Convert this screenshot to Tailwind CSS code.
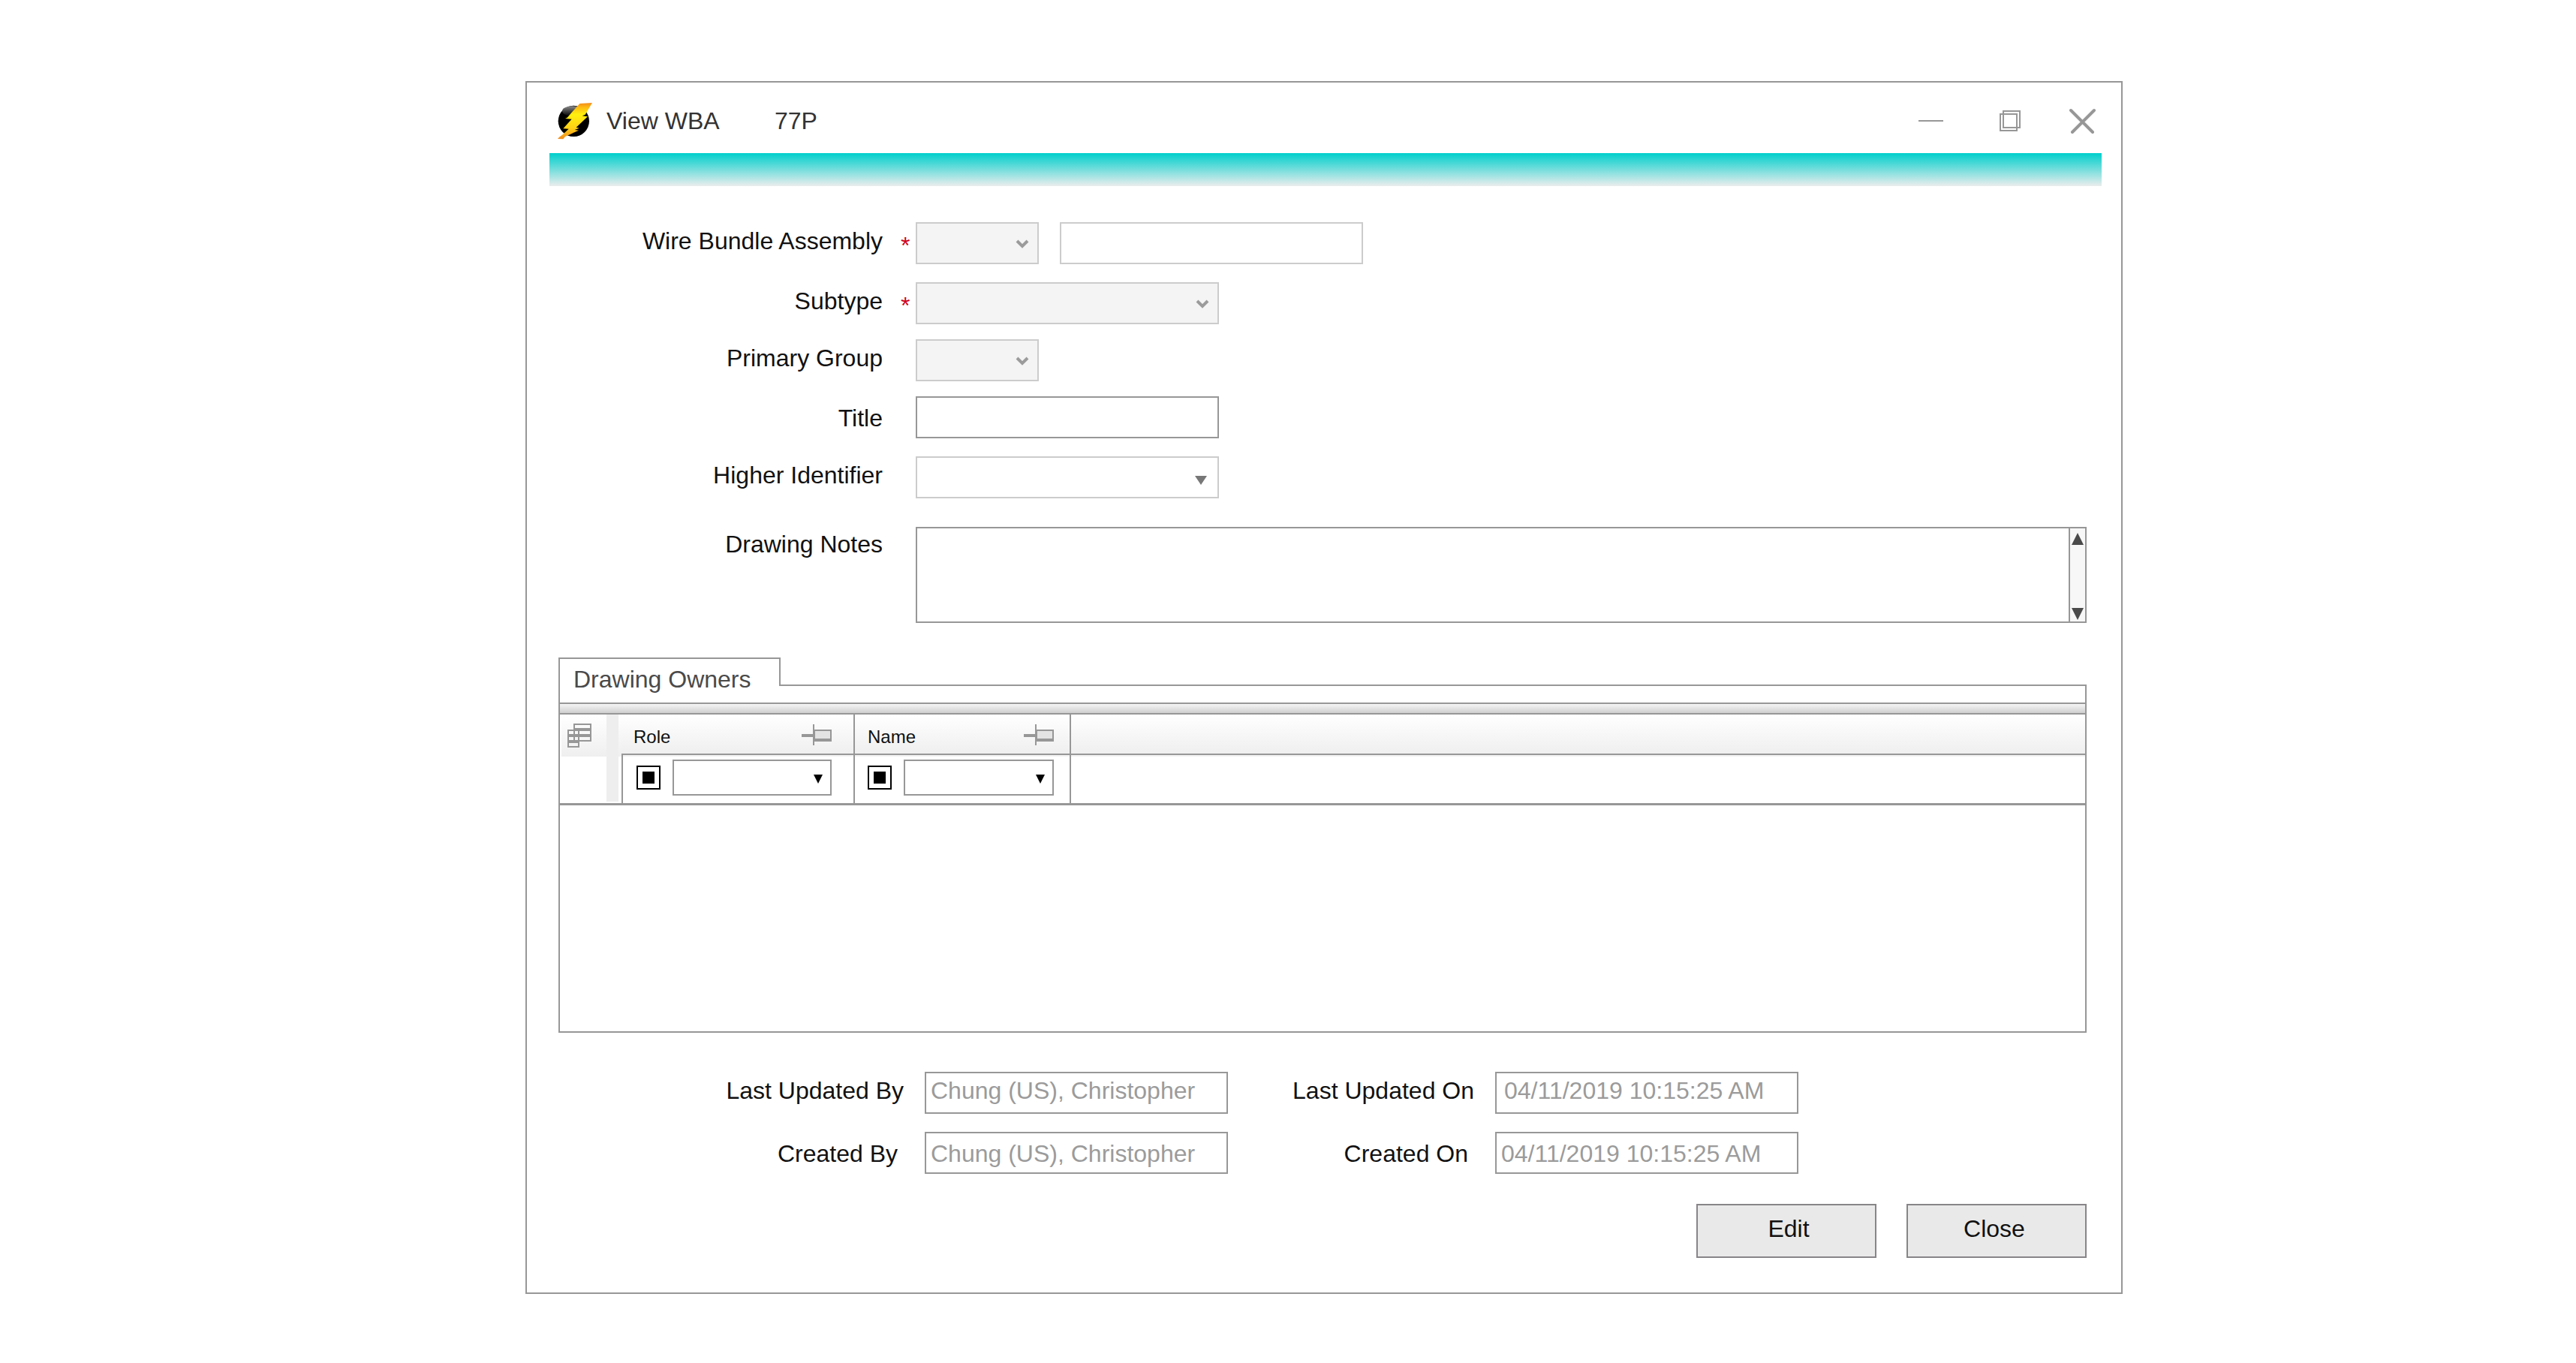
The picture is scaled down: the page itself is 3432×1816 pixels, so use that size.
<!DOCTYPE html>
<html lang="en">
<head>
<meta charset="utf-8">
<title>View WBA 77P</title>
<script src="https://cdn.jsdelivr.net/npm/@tailwindcss/browser@4"></script>
</head>
<body class="bg-white font-['Liberation_Sans',Arial,sans-serif] text-[32px] leading-9 text-[#111111]">
<div class="grid grid-cols-[700fr_2128fr_604fr] pt-[108px] pb-[92px]">
<main class="col-start-2 min-w-0 border-2 border-[#979797] bg-white pb-[46px]">

  <header class="flex h-[94px] items-center pt-2 pr-[33px] pl-[41px] text-[#333333]">
    <svg class="mr-[19px] h-[50px] w-[46px] shrink-0" viewBox="0 0 138 150" aria-hidden="true">
      <defs>
        <linearGradient id="bolt" x1="0" y1="0" x2="0" y2="1"><stop offset="0" stop-color="#f28a1c"/><stop offset=".12" stop-color="#fdb913"/><stop offset=".32" stop-color="#fff00f"/><stop offset=".7" stop-color="#ffd015"/><stop offset="1" stop-color="#f08a1c"/></linearGradient>
        <linearGradient id="gloss" x1="0" y1="0" x2="0" y2="1"><stop offset="0" stop-color="#8a8a8a"/><stop offset="1" stop-color="#000000"/></linearGradient>
      </defs>
      <circle cx="64" cy="76" r="62" fill="#000000"/>
      <ellipse cx="58" cy="36" rx="40" ry="20" fill="url(#gloss)"/>
      <path d="M138 3 88 6 38 62 30 66 56 68 22 106 44 107 20 130 6 140 0 147 22 148 30 138 84 113 68 111 86 104 74 101 120 58 98 55 110 50Z" fill="url(#bolt)"/>
    </svg>
    <h1 class="w-[224px] shrink-0">View WBA</h1>
    <span>77P</span>
    <button class="ml-auto flex h-9 w-9 items-center justify-center" aria-label="Minimize"><svg class="h-[2px] w-[33px]" viewBox="0 0 33 2"><path d="M0 1H33" stroke="#979797" stroke-width="2"/></svg></button>
    <button class="ml-[70px] flex h-9 w-9 items-center justify-center" aria-label="Restore"><svg class="h-7 w-7" viewBox="0 0 28 28" fill="none" stroke="#979797" stroke-width="2"><path d="M5 1H27V23H5ZM1 5H23V27H1Z"/></svg></button>
    <button class="ml-[61px] flex h-9 w-9 items-center justify-center" aria-label="Close window"><svg class="h-9 w-9" viewBox="0 0 36 36" stroke="#979797" stroke-width="4" stroke-linecap="round"><path d="M2 4 31 33M33 4 4 33"/></svg></button>
  </header>
  <div class="mr-[26px] ml-[30px] h-11 bg-linear-to-b/srgb from-[#00cfcc] to-[#ebeded]"></div>

  <form class="mt-12 pr-[46px]">
    <div class="grid grid-cols-[474px_44px_1fr]">
      <label for="wba" class="pt-[7px] text-right">Wire Bundle Assembly</label>
      <span class="pt-[13px] pl-6 text-[#d0021b]">*</span>
      <div class="flex gap-7">
        <div class="relative h-14 w-[164px]">
          <select id="wba" disabled class="h-14 w-full appearance-none border-2 border-[#cccccc] bg-[#f4f4f4] opacity-100"><option></option></select>
          <svg class="pointer-events-none absolute top-[23px] right-[13px] h-3 w-[18px]" viewBox="0 0 18 12" fill="none" stroke="#9b9b9b" stroke-width="4"><path d="M2 2 9 9 16 2"/></svg>
        </div>
        <input aria-label="Assembly number" class="h-14 w-[404px] border-2 border-[#cccccc] px-2">
      </div>
    </div>
    <div class="mt-6 grid grid-cols-[474px_44px_1fr]">
      <label for="subtype" class="pt-[7px] text-right">Subtype</label>
      <span class="pt-[13px] pl-6 text-[#d0021b]">*</span>
      <div class="relative h-14 w-[404px]">
        <select id="subtype" disabled class="h-14 w-full appearance-none border-2 border-[#cccccc] bg-[#f4f4f4] opacity-100"><option></option></select>
        <svg class="pointer-events-none absolute top-[23px] right-[13px] h-3 w-[18px]" viewBox="0 0 18 12" fill="none" stroke="#9b9b9b" stroke-width="4"><path d="M2 2 9 9 16 2"/></svg>
      </div>
    </div>
    <div class="mt-5 grid grid-cols-[474px_44px_1fr]">
      <label for="group" class="pt-[7px] text-right">Primary Group</label>
      <div class="relative col-start-3 h-14 w-[164px]">
        <select id="group" disabled class="h-14 w-full appearance-none border-2 border-[#cccccc] bg-[#f4f4f4] opacity-100"><option></option></select>
        <svg class="pointer-events-none absolute top-[23px] right-[13px] h-3 w-[18px]" viewBox="0 0 18 12" fill="none" stroke="#9b9b9b" stroke-width="4"><path d="M2 2 9 9 16 2"/></svg>
      </div>
    </div>
    <div class="mt-5 grid grid-cols-[474px_44px_1fr]">
      <label for="title" class="pt-[11px] text-right">Title</label>
      <input id="title" class="col-start-3 h-14 w-[404px] border-2 border-[#979797] px-2">
    </div>
    <div class="mt-6 grid grid-cols-[474px_44px_1fr]">
      <label for="higher" class="pt-[7px] text-right">Higher Identifier</label>
      <div class="relative col-start-3 h-14 w-[404px]">
        <select id="higher" class="h-14 w-full appearance-none border-2 border-[#cccccc] bg-white"><option></option></select>
        <svg class="pointer-events-none absolute top-[26px] right-4 h-3 w-4" viewBox="0 0 16 12"><path d="M0 0H16L8 12Z" fill="#777777"/></svg>
      </div>
    </div>
    <div class="mt-[38px] grid grid-cols-[474px_44px_1fr]">
      <label for="notes" class="pt-[5px] text-right">Drawing Notes</label>
      <div class="col-start-3 flex h-32 border-2 border-[#979797]">
        <textarea id="notes" class="min-w-0 flex-1 resize-none overflow-hidden px-2"></textarea>
        <div class="flex w-[22px] flex-col items-center justify-between border-l-2 border-[#979797] bg-[#f7f7f7] pt-[6px] pb-[2px]">
          <button type="button" aria-label="Scroll up"><svg class="block h-4 w-4" viewBox="0 0 16 16"><path d="M0 16H16L8 0Z" fill="#4a4a4a"/></svg></button>
          <button type="button" aria-label="Scroll down"><svg class="block h-4 w-4" viewBox="0 0 16 16"><path d="M0 0H16L8 16Z" fill="#4a4a4a"/></svg></button>
        </div>
      </div>
    </div>

    <section class="mt-[46px] ml-[42px]">
      <div class="flex h-[60px]">
        <button type="button" role="tab" aria-selected="true" class="flex w-[296px] items-start justify-between border-t-2 border-l-2 border-[#979797] pl-[18px] text-[#4a4a4a]">
          <span class="pt-[9px]">Drawing Owners</span>
          <span class="h-9 w-[2px] bg-[#979797]"></span>
        </button>
        <div class="mt-9 flex-1 border-t-2 border-r-2 border-[#979797]"></div>
      </div>
      <div class="h-4 border-2 border-[#979797] bg-linear-to-b/srgb from-[#f5f5f5] to-[#cfcfcf]"></div>
      <div class="border-x-2 border-b-2 border-[#979797]">
        <table class="w-full table-fixed border-separate border-spacing-0 text-left text-2xl leading-7">
          <colgroup><col class="w-[82px]"><col class="w-[311px]"><col class="w-[288px]"><col></colgroup>
          <tbody>
          <tr class="h-[52px]">
            <td rowspan="2" class="h-[121px] border-b-3 border-[#979797] p-0 pb-[2px] pl-[2px] align-top">
              <div class="flex h-[116px] items-start">
                <div class="flex h-14 w-[60px] pt-3 pl-2 bg-linear-to-b/srgb from-white to-[#efefef]">
                  <svg class="h-8 w-8" viewBox="0 0 32 32" fill="none" stroke="#979797" stroke-width="2"><path d="M9 1H31V7H9ZM9 9H31V15H9ZM9 17H31V23H9ZM1 9H15V15H1ZM1 17H15V23H1ZM1 25H15V31H1Z"/></svg>
                </div>
                <div class="h-[116px] w-4 bg-[#eeeeee]"></div>
                <div class="h-14 w-1 bg-linear-to-b/srgb from-white to-[#efefef]"></div>
              </div>
            </td>
            <th scope="col" class="border-r-2 border-[#979797] bg-linear-to-b/srgb from-white to-[#efefef] p-0 pr-[29px] pl-4 align-top font-normal">
              <div class="flex items-start justify-between pt-[13px]"><span class="pt-[3px]">Role</span>
                <svg class="h-7 w-10" viewBox="0 0 40 28"><path d="M0 13H16V17H0ZM15 0H17V28H15ZM17 7H40V23H17Z" fill="#979797"/><path d="M18 9H38V19H18Z" fill="#e3e3e3"/></svg></div>
            </th>
            <th scope="col" class="border-r-2 border-[#979797] bg-linear-to-b/srgb from-white to-[#efefef] p-0 pr-[21px] pl-[17px] align-top font-normal">
              <div class="flex items-start justify-between pt-[13px]"><span class="pt-[3px]">Name</span>
                <svg class="h-7 w-10" viewBox="0 0 40 28"><path d="M0 13H16V17H0ZM15 0H17V28H15ZM17 7H40V23H17Z" fill="#979797"/><path d="M18 9H38V19H18Z" fill="#e3e3e3"/></svg></div>
            </th>
            <td class="bg-linear-to-b/srgb from-white to-[#efefef] p-0"></td>
          </tr>
          <tr class="h-[69px]">
            <td class="border-t-2 border-r-2 border-b-3 border-l-2 border-[#979797] p-0 pr-[29px] pl-[18px] align-top shadow-[inset_0_2px_0_#f1f1f1]">
              <div class="flex items-center gap-4 pt-[6px]">
                <input type="checkbox" checked aria-label="Filter by role" class="h-8 w-8 shrink-0 appearance-none border-2 border-black bg-black shadow-[inset_0_0_0_6px_#ffffff]">
                <div class="relative h-12 flex-1">
                  <select aria-label="Role filter" class="h-12 w-full appearance-none border-2 border-[#979797] bg-white"><option></option></select>
                  <svg class="pointer-events-none absolute top-5 right-3 h-3 w-3" viewBox="0 0 12 12"><path d="M0 0H12L6 12Z"/></svg>
                </div>
              </div>
            </td>
            <td class="border-t-2 border-r-2 border-b-3 border-[#979797] p-0 pr-[21px] pl-[17px] align-top shadow-[inset_0_2px_0_#f1f1f1]">
              <div class="flex items-center gap-4 pt-[6px]">
                <input type="checkbox" checked aria-label="Filter by name" class="h-8 w-8 shrink-0 appearance-none border-2 border-black bg-black shadow-[inset_0_0_0_6px_#ffffff]">
                <div class="relative h-12 flex-1">
                  <select aria-label="Name filter" class="h-12 w-full appearance-none border-2 border-[#979797] bg-white"><option></option></select>
                  <svg class="pointer-events-none absolute top-5 right-3 h-3 w-3" viewBox="0 0 12 12"><path d="M0 0H12L6 12Z"/></svg>
                </div>
              </div>
            </td>
            <td class="border-t-2 border-b-3 border-[#979797] p-0 shadow-[inset_0_2px_0_#f1f1f1]"></td>
          </tr>
          </tbody>
        </table>
        <div class="min-h-[301px]"></div>
      </div>
    </section>

    <div class="mt-[52px] grid grid-cols-[502px_404px_300px_404px] gap-x-7 gap-y-6">
      <label for="ub" class="pt-[7px] text-right">Last Updated By</label>
      <input id="ub" readonly value="Chung (US), Christopher" class="h-14 border-2 border-[#979797] px-[6px] pb-[6px] text-[#9b9b9b]">
      <label for="uo" class="pt-[7px] text-right">Last Updated On</label>
      <input id="uo" readonly value="04/11/2019 10:15:25 AM" class="h-14 border-2 border-[#979797] px-[10px] pb-[6px] text-[#9b9b9b]">
      <label for="cb" class="pt-[11px] pr-2 text-right">Created By</label>
      <input id="cb" readonly value="Chung (US), Christopher" class="h-14 border-2 border-[#979797] px-[6px] pt-[2px] text-[#9b9b9b]">
      <label for="co" class="pt-[11px] pr-2 text-right">Created On</label>
      <input id="co" readonly value="04/11/2019 10:15:25 AM" class="h-14 border-2 border-[#979797] px-[6px] pt-[2px] text-[#9b9b9b]">
    </div>

    <div class="mt-10 flex justify-end gap-10">
      <button type="button" class="h-[72px] w-[240px] border-2 border-[#888588] bg-[#e9e9e9] pb-[6px] pl-[6px]">Edit</button>
      <button type="button" class="h-[72px] w-[240px] border-2 border-[#888588] bg-[#e9e9e9] pr-[6px] pb-[6px]">Close</button>
    </div>
  </form>
</main>
</div>
</body>
</html>
